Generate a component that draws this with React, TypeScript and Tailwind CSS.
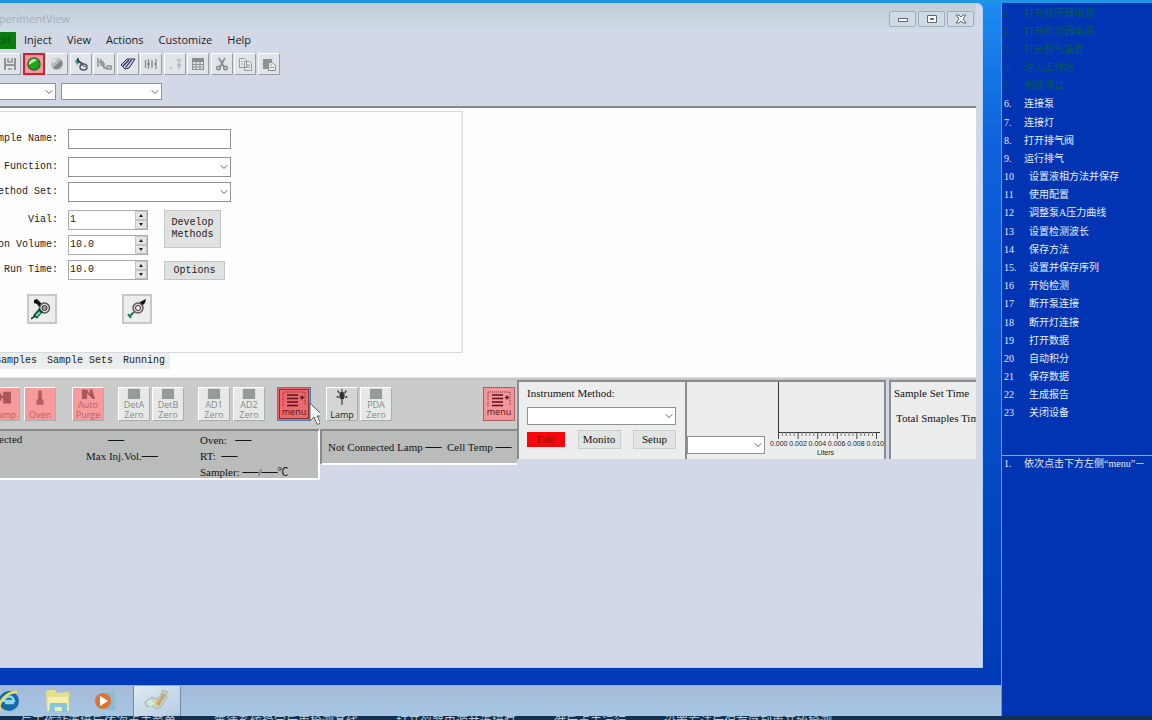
import type { ReactNode } from "react";
import clsx from "clsx";
import { ChevronDown } from "lucide-react";

const MONO = "font-['Liberation_Mono','Noto_Sans_CJK_SC',monospace]";
const SERIF = "font-['Liberation_Serif','Noto_Sans_CJK_SC',serif]";
const SANS = "font-['Open_Sans','Noto_Sans_CJK_SC',sans-serif]";

const menus = ["Inject", "View", "Actions", "Customize", "Help"];

const steps = [
  "打开稳压器电源",
  "打开检测器电源",
  "打开脱气装置",
  "进入工作站",
  "创建项目",
  "连接泵",
  "连接灯",
  "打开排气阀",
  "运行排气",
  "设置液相方法并保存",
  "使用配置",
  "调整泵A压力曲线",
  "设置检测波长",
  "保存方法",
  "设置并保存序列",
  "开始检测",
  "断开泵连接",
  "断开灯连接",
  "打开数据",
  "自动积分",
  "保存数据",
  "生成报告",
  "关闭设备",
];

const tools: { name: string; icon: ReactNode }[] = [
  {
    name: "Save",
    icon: (
      <g fill="none" stroke="#8f9494" strokeWidth="2">
        <path d="M3 2v12M13 2v12M3 9h10" />
        <path d="M6 2v4h4V2M6 13h4" strokeWidth="1.500" />
      </g>
    ),
  },
  {
    name: "Start",
    icon: (
      <g>
        <circle cx="8" cy="8" r="6" fill="#18a818" stroke="#3c5a38" strokeWidth="1.500" />
        <path d="M3 9a5 5 0 0 1 8-5Z" fill="#a9f59c" />
      </g>
    ),
  },
  {
    name: "Stop",
    icon: (
      <g>
        <circle cx="8" cy="8" r="6" fill="#b5b8b8" />
        <path d="M4 12 12.500 4A6 6 0 0 1 4 12Z" fill="#7e8383" />
        <path d="M3 8a5 5 0 0 1 6-5Z" fill="#f0f0f0" />
      </g>
    ),
  },
  {
    name: "Inject vial",
    icon: (
      <g fill="none">
        <path d="M2 5 5 2l2 4-3 3Z" fill="#4f918a" />
        <path d="M5 2v3l5 3" stroke="#1b3f3e" strokeWidth="1.500" />
        <ellipse cx="10.500" cy="11" rx="3.500" ry="3" stroke="#4c5866" strokeWidth="1.500" fill="#dfe4ec" />
        <path d="m8 9 5 2" stroke="#555f6c" />
      </g>
    ),
  },
  {
    name: "Samples",
    icon: (
      <g fill="none" stroke="#8a8f8f" strokeWidth="1.500">
        <path d="M2 2v9M5 3v7M2 6h5v5M8 7v5h3" />
        <path d="M11 10h4v3h-4z" />
      </g>
    ),
  },
  {
    name: "Sample set",
    icon: (
      <g>
        <path d="M1 9 7 3h8l-6 9-4 1Z" fill="#c9cfee" stroke="#23284c" />
        <path d="m3 10 6-6M5.500 11.500l6-7.500" stroke="#23284c" strokeWidth="1.200" />
      </g>
    ),
  },
  {
    name: "Vials",
    icon: <path d="M2.500 4v8M5.500 3v10M9 4v8M13 3v10M4 8h3M11 8h3" stroke="#8a8f8f" strokeWidth="1.400" />,
  },
  {
    name: "Trace",
    icon: <path d="m10 3 2 2 2-2M12 6v7M10 9h4M3 12h2" fill="none" stroke="#b0b4b4" strokeWidth="1.300" />,
  },
  {
    name: "Table",
    icon: (
      <g>
        <path d="M2 2h12v4H2z" fill="#888d8d" />
        <path d="M2.500 6v8M6 6v8M10 6v8M13.500 6v8M2 8.500h12M2 11h12M2 13.500h12" stroke="#8c9191" />
      </g>
    ),
  },
  {
    name: "Cut",
    icon: (
      <g fill="none" stroke="#858a8a" strokeWidth="1.600">
        <path d="m5 2 5 9M11 2 6 11" />
        <circle cx="4.500" cy="12" r="1.700" />
        <circle cx="11.500" cy="12" r="1.700" />
      </g>
    ),
  },
  {
    name: "Copy",
    icon: (
      <g fill="#e8eaea" stroke="#979c9c">
        <path d="M2.500 2.500h5l2 2v7h-7zM7.500 5.500h5l2 2v7h-7z" />
        <path d="M4 5.500h2M4 8h2M9 9h4M9 11h4" />
      </g>
    ),
  },
  {
    name: "Paste",
    icon: (
      <g>
        <path d="M2 3h9v10H2z" fill="#8d9292" />
        <path d="M7.500 6.500h4l3 3v5h-7z" fill="#eceeee" stroke="#858a8a" />
        <path d="M9 9h2M9 11.500h4" stroke="#999" />
      </g>
    ),
  },
];

const captions = ["与工作站连接后依次点击菜单", "等待系统稳定后再检测基线", "打开仪器电源并连接泵", "然后点击运行", "设置方法后保存序列再开始检测"];

function Picker({ label, className, box }: { label: string; className?: string; box?: string }) {
  return (
    <span className={clsx("relative flex", className)}>
      <select aria-label={label} className={clsx("w-full appearance-none border border-[#8f9292] bg-white", box ?? "h-5")} />
      <ChevronDown size={12} strokeWidth={2} className="pointer-events-none absolute top-1/2 right-[1px] -translate-y-1/2 text-[#666]" />
    </span>
  );
}

function Row({ id, label, children }: { id: string; label: string; children: ReactNode }) {
  return (
    <div className="flex items-center">
      <label htmlFor={id} className="w-[120px] shrink-0 pr-[10px] text-right whitespace-nowrap">
        {label}
      </label>
      {children}
    </div>
  );
}

function SelectRow({ id, label }: { id: string; label: string }) {
  return (
    <Row id={id} label={label}>
      <span className="relative flex w-[163px]">
        <select id={id} className="h-5 w-full appearance-none border border-[#8f9292] bg-white" />
        <ChevronDown size={12} strokeWidth={2} className="pointer-events-none absolute top-1 right-[1px] text-[#666]" />
      </span>
    </Row>
  );
}

function SpinRow({ id, label, value }: { id: string; label: string; value: string }) {
  return (
    <Row id={id} label={label}>
      <span className="flex h-5 w-20 border border-[#a9acac] bg-white">
        <input id={id} defaultValue={value} className="min-w-0 flex-1 pb-[2px] pl-px leading-none outline-none" />
        <span className="flex w-3 flex-col bg-[#e4e6e6]">
          <button aria-label={`${label} up`} className="flex flex-1 items-center justify-center border border-[#c2c5c5]">
            <svg width="6" height="3" viewBox="0 0 6 3"><path d="M1 3 3 0l2 3Z" fill="#222" /></svg>
          </button>
          <button aria-label={`${label} down`} className="flex flex-1 items-center justify-center border border-[#c2c5c5]">
            <svg width="6" height="3" viewBox="0 0 6 3"><path d="m1 0 2 3 2-3Z" fill="#222" /></svg>
          </button>
        </span>
      </span>
    </Row>
  );
}

function DeviceButton({ lines, tone = "gray", icon }: { lines: string[]; tone?: "gray" | "pink" | "live"; icon?: ReactNode }) {
  return (
    <button
      className={clsx(
        "flex h-[34px] w-8 shrink-0 flex-col items-center justify-between border border-t-white border-r-[#aaadab] border-b-[#aaadab] border-l-white text-[9px]",
        tone === "gray" && "bg-[#e6e9e7] text-[#858a87]",
        tone === "pink" && "bg-[#f79a9c] text-[#b56468]",
        tone === "live" && "bg-[#d3d6d4] text-[#222]"
      )}
    >
      <svg width="14" height={lines.length > 1 ? 11 : 18} viewBox="0 0 16 14" preserveAspectRatio="none">
        {icon ?? <path d="M1 1h14v13H1z" fill="#969b98" />}
      </svg>
      <span className="flex flex-col leading-[10px]">
        {lines.map((line) => (
          <span key={line}>{line}</span>
        ))}
      </span>
    </button>
  );
}

function MenuButton({ active }: { active?: boolean }) {
  return (
    <button
      className={clsx(
        "flex h-[34px] shrink-0 flex-col items-center justify-center border text-[9px] leading-[10px] text-[#5c1218]",
        active ? "w-[34px] border-[#4e7cab] bg-[#e8696e] outline-1 -outline-offset-3 outline-[#8c3236]" : "w-8 border-[#a65e62] bg-[#f2969a]"
      )}
    >
      <svg width="24" height="16" viewBox="0 0 24 16">
        <path d="M1 15V1h22v14" fill="none" stroke="#7c2a30" strokeDasharray="1 1" />
        <path d="M5 4h11M5 7.500h11M5 11h11M5 14.500h11" stroke="#5c1218" strokeWidth="1.700" />
        <path d="M18 6.500h4M20 4.500v4" stroke="#5c1218" strokeWidth="1.300" />
      </svg>
      menu
    </button>
  );
}

function Dash() {
  return <span className="text-base leading-none">—</span>;
}

function TitleBar() {
  return (
    <header className="flex h-[29px] items-center justify-between bg-linear-to-b from-[#c2ccd6] to-[#d0dce8] pr-[2px]">
      <h1 className={clsx(SANS, "-ml-[13px] pt-1 text-[11px] text-[#a6afb9]")}>ExperimentView</h1>
      <div className="flex gap-[2px] pt-[2px]">
        {["Minimize", "Restore", "Close"].map((name, i) => (
          <button key={name} aria-label={name} className="flex h-4 w-[27px] items-center justify-center rounded-xs border border-[#a1acb8] bg-[#d0dae4]">
            <svg width="12" height="10" viewBox="0 0 12 10" fill="none" stroke="#5d6874" strokeWidth="1">
              {i === 0 && <rect x="1.500" y="4.500" width="9" height="3" fill="#fff" />}
              {i === 1 && <path d="M1.500 1.500h9v7h-9zM4.500 4.500h3v1h-3z" fill="#fff" />}
              {i === 2 && <path d="M1 1h3l2 2 2-2h3L8 5l3 4H8L6 7 4 9H1l3-4Z" fill="#fff" />}
            </svg>
          </button>
        ))}
      </div>
    </header>
  );
}

function Toolbars() {
  return (
    <div className="border-b-2 border-[#85898f] bg-[#d3d8e6] pb-[6px]">
      <nav className={clsx(SANS, "flex h-[17px] items-center gap-[15px] text-[11px] text-[#1b1c22]")}>
        <button className="-mr-[7px] flex h-full w-4 items-center justify-end overflow-hidden bg-[#0a7d0f] pr-[5px] text-[#04560a]">Edit</button>
        {menus.map((menu) => (
          <button key={menu}>{menu}</button>
        ))}
      </nav>
      <div className="-ml-px flex w-[281px] justify-between pt-1">
        {tools.map((tool) => (
          <button
            key={tool.name}
            aria-label={tool.name}
            className={clsx(
              "flex size-[22px] items-center justify-center border",
              tool.name === "Start" ? "border-2 border-[#d81c2c] bg-[#ef9ca0]" : "border-t-white border-r-[#9a9ea6] border-b-[#9a9ea6] border-l-white bg-[#e1e4e8]"
            )}
          >
            <svg width="16" height="16" viewBox="0 0 16 16" className="shrink-0">{tool.icon}</svg>
          </button>
        ))}
      </div>
      <div className="flex gap-[5px] pt-2">
        <Picker label="Project" className="w-14" box="h-[17px] border-l-0" />
        <Picker label="System" className="w-[101px]" box="h-[17px]" />
      </div>
    </div>
  );
}

function SampleForm() {
  return (
    <section className={clsx(MONO, "overflow-hidden bg-[#fdfefd] pt-[3px] pb-2 text-[10px] leading-3 text-[#222]")}>
      <div className="w-[463px] border-t border-r-2 border-b border-[#d6dadf] border-r-[#e3e5e8] pb-7">
        <div className="-ml-[52px] flex flex-col gap-2 pt-[17px]">
          <Row id="sample-name" label="Sample Name:">
            <input id="sample-name" className="h-5 w-[163px] border border-[#8f9292] bg-white px-1" />
          </Row>
          <div className="flex flex-col gap-[5px]">
            <SelectRow id="function" label="Function:" />
            <SelectRow id="method-set" label="Method Set:" />
          </div>
          <div className="flex gap-4">
            <div className="flex flex-col gap-[5px]">
              <SpinRow id="vial" label="Vial:" value="1" />
              <SpinRow id="volume" label="Injection Volume:" value="10.0" />
              <SpinRow id="run-time" label="Run Time:" value="10.0" />
            </div>
            <div className="flex flex-col items-start justify-between">
              <button className="h-[38px] w-[57px] border border-[#c3c6c6] bg-[#dfe2e1]">
                Develop Methods
              </button>
              <button className="h-[19px] w-[61px] border border-[#c3c6c6] bg-[#dfe2e1]">Options</button>
            </div>
          </div>
        </div>
        <div className="flex gap-[65px] pt-[14px] pl-[27px]">
          <button aria-label="Load syringe" className="flex size-[30px] items-center justify-center border-2 border-[#c6c9c9] bg-[#eceeee]">
            <svg width="22" height="22" viewBox="0 0 22 22">
              <path d="m3 2 3-1 5 5-3 3-2-3-3-1Z" fill="#111" />
              <path d="m8 6 4 4" stroke="#111" strokeWidth="2" />
              <circle cx="13.500" cy="10" r="5" fill="#d8d8da" stroke="#555" strokeWidth="1.500" />
              <circle cx="13.500" cy="10" r="2.500" fill="#999" stroke="#333" />
              <path d="m10 12-6 7" stroke="#153d38" strokeWidth="5" />
              <path d="m9 14-4 4" stroke="#58d2ac" strokeWidth="2.500" />
              <path d="m4 18-4 3" stroke="#111" strokeWidth="1.500" />
            </svg>
          </button>
          <button aria-label="Inject syringe" className="flex size-[30px] items-center justify-center border-2 border-[#c6c9c9] bg-[#eceeee]">
            <svg width="22" height="22" viewBox="0 0 22 22">
              <path d="m20 1-6 3-1 3 3 1 3-3Z" fill="#111" />
              <path d="m15 6-4 4" stroke="#111" strokeWidth="2" />
              <circle cx="12" cy="10" r="5" fill="#ddd6d8" stroke="#665558" strokeWidth="1.500" />
              <circle cx="12" cy="10" r="2.500" fill="#eee" stroke="#333" />
              <path d="m8 14-5 5M2 16l3 4" stroke="#1d7a5c" strokeWidth="2" />
            </svg>
          </button>
        </div>
      </div>
      <div className="-ml-[10px] flex">
        {["Samples", "Sample Sets", "Running"].map((tab) => (
          <button key={tab} className="h-4 bg-[#eceeed] px-[5px] whitespace-nowrap">{tab}</button>
        ))}
      </div>
    </section>
  );
}

function PumpPanel() {
  return (
    <section className="flex w-80 shrink-0 flex-col">
      <div className={clsx(SANS, "flex h-[49px] items-start overflow-hidden bg-[#c9ccca] pt-[7px]")}>
        <div className="-ml-3 flex gap-1">
          <DeviceButton lines={["Lamp"]} tone="pink" icon={<path d="M1 4h4v2h2V3h9v9H7V8H5v2H1Z" fill="#a8585c" />} />
          <DeviceButton lines={["Oven"]} tone="pink" icon={<path d="M6 2h4v7h2v4H4V9h2Z" fill="#b05d61" />} />
        </div>
        <div className="ml-4 flex">
          <DeviceButton lines={["Auto", "Purge"]} tone="pink" icon={<path d="M1 14V2h6l3 6V2h3l3 12h-3l-2-3-4-4v7Z" fill="#a8585c" />} />
        </div>
        <div className="ml-[14px] flex gap-[2px]">
          <DeviceButton lines={["DetA", "Zero"]} />
          <DeviceButton lines={["DetB", "Zero"]} />
        </div>
        <div className="ml-[14px] flex gap-[3px]">
          <DeviceButton lines={["AD1", "Zero"]} />
          <DeviceButton lines={["AD2", "Zero"]} />
        </div>
        <div className="relative ml-3 flex">
          <MenuButton active />
          <svg width="15" height="24" viewBox="0 0 15 24" className="absolute top-[15px] left-[32px] z-10">
            <path d="M1 1v18l4-4 3.500 7.500 3-1.500L8 14h6Z" fill="#fff" stroke="#555a60" />
          </svg>
        </div>
      </div>
      <div className={clsx(SERIF, "flex h-[51px] border-t-2 border-r-2 border-b-2 border-t-[#878a88] border-r-white border-b-white bg-[#b9bcba] text-[11px] leading-3 whitespace-nowrap text-[#151515]")}>
        <p className="-ml-11 w-[130px] pt-[2px]">Not Connected</p>
        <div className="flex w-[114px] flex-col">
          <p className="pl-[22px]"><Dash /></p>
          <p>Max Inj.Vol.<Dash /></p>
        </div>
        <div className="flex flex-col">
          <p>Oven:&nbsp; &nbsp;<Dash /></p>
          <p>RT:&nbsp; <Dash /></p>
          <p>Sampler: <Dash />/<Dash />℃</p>
        </div>
      </div>
    </section>
  );
}

function DetectorPanel() {
  return (
    <section className="flex w-[197px] shrink-0 flex-col">
      <div className={clsx(SANS, "flex h-[49px] items-start justify-between bg-[#c9ccca] pt-[7px] pr-[2px] pl-[6px]")}>
        <div className="flex gap-[2px]">
          <DeviceButton
            lines={["Lamp"]}
            tone="live"
            icon={
              <g>
                <circle cx="8" cy="6" r="3" fill="#333" />
                <path d="M8 9v4M8 1v2M3 2l2 2M13 2l-2 2M2 7h2M12 7h2" stroke="#444" strokeWidth="1.500" />
              </g>
            }
          />
          <DeviceButton lines={["PDA", "Zero"]} />
        </div>
        <MenuButton />
      </div>
      <p className={clsx(SERIF, "h-9 overflow-hidden border-2 border-t-[#878a88] border-r-0 border-b-white border-l-[#878a88] bg-[#b9bcba] pl-[6px] text-[11px] leading-8 whitespace-nowrap text-[#151515]")}>
        Not Connected Lamp <Dash />&nbsp; Cell Temp <Dash />
      </p>
    </section>
  );
}

function MethodPanel() {
  return (
    <section className={clsx(SERIF, "h-[79px] w-[168px] shrink-0 border-t-2 border-l-2 border-[#8a8d8f] bg-[#eceeee] px-[8px] pt-[3px] text-[11px] leading-4 text-[#111]")}>
      <h2>Instrument Method:</h2>
      <Picker label="Instrument Method" className="mt-[6px] w-[149px]" box="h-[18px]" />
      <div className="mt-[5px] flex justify-between pr-[1px]">
        <button className="mt-[2px] h-[15px] w-[38px] bg-[#fa0509] leading-none text-[#8c0606]">Edit</button>
        <button className="h-[19px] w-[43px] border border-[#cbcece] bg-[#e1e4e3] leading-none">Monito</button>
        <button className="h-[19px] w-[43px] border border-[#cbcece] bg-[#e1e4e3] leading-none">Setup</button>
      </div>
    </section>
  );
}

function PressurePanel() {
  return (
    <section className="flex h-[79px] w-[201px] shrink-0 items-end border-2 border-b-0 border-[#8a8d8f] bg-[#eceeee]">
      <Picker label="Channel" className="mr-[2px] mb-[5px] w-[78px] shrink-0" box="h-[18px]" />
      <div className="flex min-w-0 flex-1 flex-col self-stretch font-['Liberation_Sans',sans-serif] text-[7px] leading-[9px] text-[#222]">
        <svg width="116" height="57" viewBox="0 0 116 57" className="shrink-0">
          <path d="M11.500 0v51M11 50.500h102" stroke="#333" fill="none" />
          <path d="M11.500 50v7M31.100 50v7M50.700 50v7M70.300 50v7M89.900 50v7M109.500 50v7" stroke="#444" />
          <path d="M15.400 50v4M19.300 50v4M23.200 50v4M27.100 50v4M35 50v4M38.900 50v4M42.800 50v4M46.700 50v4M54.600 50v4M58.500 50v4M62.400 50v4M66.300 50v4M74.200 50v4M78.100 50v4M82 50v4M85.900 50v4M93.800 50v4M97.700 50v4M101.600 50v4M105.500 50v4" stroke="#777" />
        </svg>
        <div className="flex justify-between pl-[3px]">
          {["0.000", "0.002", "0.004", "0.006", "0.008", "0.010"].map((tick) => (
            <span key={tick}>{tick}</span>
          ))}
        </div>
        <p className="text-center">Liters</p>
      </div>
    </section>
  );
}

function TimePanel() {
  return (
    <section className={clsx(SERIF, "ml-[3px] flex h-[79px] min-w-0 flex-1 flex-col gap-[9px] overflow-hidden border-t-2 border-l-2 border-[#8a8d8f] bg-[#eceeee] pt-[3px] pl-[3px] text-[11px] leading-4 whitespace-nowrap text-[#111]")}>
      <p>Sample Set Time</p>
      <p className="pl-[2px]">Total Smaples Time</p>
    </section>
  );
}

function Taskbar() {
  return (
    <footer className="flex h-[31px] items-stretch border-t border-[#87b2e2] bg-linear-to-b from-[#a4bbd8] to-[#a6c6e4]">
      <button aria-label="Internet Explorer" className="-ml-1 flex w-[34px] items-center justify-start">
        <svg width="26" height="26" viewBox="0 0 26 26">
          <circle cx="13" cy="13" r="10" fill="#1768a8" />
          <path d="M8 14a5 5 0 0 1 10-1H9M9 15h9" fill="none" stroke="#8ed8f2" strokeWidth="2.500" />
          <path d="M4 23C1 16 9 4 21 4" fill="none" stroke="#f0dc60" strokeWidth="2.500" />
        </svg>
      </button>
      <button aria-label="Explorer" className="ml-[14px] flex items-center">
        <svg width="28" height="26" viewBox="0 0 28 26">
          <path d="M2 4 5 2h6l2 3 12-1v19H3Z" fill="#e6e08c" />
          <path d="M4 9h20v14H4Z" fill="#f2eeae" />
          <path d="M6 15h17v9h-5v-5h-7v5H5Z" fill="#84c6dc" />
        </svg>
      </button>
      <button aria-label="Media Player" className="ml-[20px] flex items-center">
        <svg width="24" height="24" viewBox="0 0 24 24">
          <path d="M14 3h9v18h-9Z" fill="#8dbbd0" />
          <circle cx="11" cy="12" r="8" fill="#dc7434" />
          <path d="m8 7 8 5-8 5Z" fill="#fff" />
        </svg>
      </button>
      <button aria-label="Chromatography" className="ml-[17px] flex w-12 items-center justify-center border-x border-[#7289a6] bg-linear-to-br from-[#e0eaf4] to-[#b5cbe2]">
        <svg width="28" height="26" viewBox="0 0 28 26">
          <path d="m19 2 6 2-2 3 1 3-6 9-5 2-4-3-5 1-2-5 7-5 5 2 5-6Z" fill="#cfd0bd" stroke="#98a39d" strokeWidth="0.700" />
          <path d="m20 5 3 2-7 11-3-2Z" fill="#bda87c" />
          <path d="m3 14 5-3 3 5-4 3Z" fill="#c6efdc" />
          <path d="m13 15 4-4-1 6Z" fill="#e4a04c" />
        </svg>
      </button>
    </footer>
  );
}

function StepList() {
  return (
    <aside className={clsx(SERIF, "flex w-[151px] shrink-0 flex-col overflow-hidden border-l border-[#5b9ae6] bg-[#0034b3] text-[10px] whitespace-nowrap text-[#e3efff]")}>
      <ol className="flex h-[453px] flex-col border-b border-[#7fb1ee] pt-px pb-[33px] pl-[2px]">
        {steps.map((step, i) => (
          <li key={step} className={clsx("flex flex-1 items-center", i < 5 && "text-[#035a5c]")}>
            <span className={clsx("shrink-0", i < 9 ? "w-5" : "w-[25px]")}>
              {i < 9 || i === 14 ? `${i + 1}.` : i + 1}
            </span>
            <span>{step}</span>
          </li>
        ))}
      </ol>
      <p className="flex pl-[2px]">
        <span className="w-5 shrink-0">1.</span>
        依次点击下方左侧“menu”－
      </p>
    </aside>
  );
}

export default function App() {
  return (
    <div className="flex h-screen flex-col overflow-hidden bg-[#0b2342]">
      <div className="h-[3px] shrink-0 bg-[#1f95e6]" />
      <div className="flex min-h-0 flex-1">
        <main className="flex min-w-0 flex-1 flex-col bg-linear-to-b from-[#1d8cf0] via-[#1060dc] via-20% to-[#0038b4]">
          <div className="mr-[18px] mb-[17px] flex min-h-0 flex-1 flex-col overflow-hidden rounded-tr-md border-r border-b border-[#a9d5f4] bg-[#d2d8e7] pr-[6px]">
            <TitleBar />
            <Toolbars />
            <SampleForm />
            <div className="h-[3px] shrink-0 bg-linear-to-b from-[#e4e6e8] to-[#b4b7b8]" />
            <div className="flex items-start">
              <PumpPanel />
              <DetectorPanel />
              <MethodPanel />
              <PressurePanel />
              <TimePanel />
            </div>
          </div>
          <Taskbar />
        </main>
        <StepList />
      </div>
      <p className={clsx(SANS, "flex h-1 shrink-0 justify-between overflow-hidden bg-[#123052] pr-[320px] pl-5 text-xs leading-3 whitespace-nowrap text-[#b5cddf]")}>
        {captions.map((caption) => (
          <span key={caption}>{caption}</span>
        ))}
      </p>
    </div>
  );
}
